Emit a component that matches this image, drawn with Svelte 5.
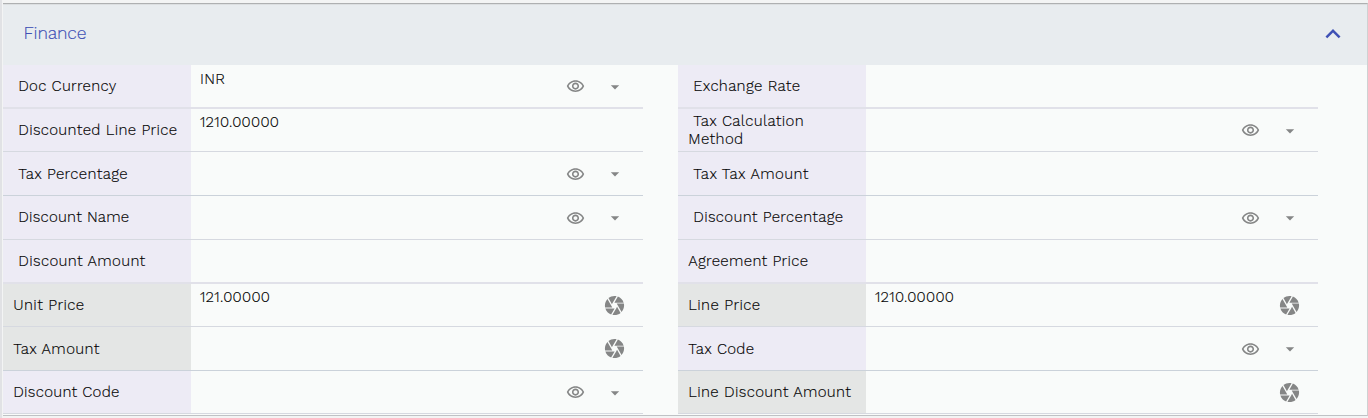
<script>
  const heights = [44, 43, 44, 44, 44, 43, 44, 43];
  const labelTops = [12, 12, 13, 12, 12, 12, 13, 12];
  const left = [
    { lines: [['Doc Currency', 98]], indent: true, value: 'INR', vw: 25, icons: 'lookup' },
    { lines: [['Discounted Line Price', 159]], indent: true, value: '1210.00000', vw: 79 },
    { lines: [['Tax Percentage', 109.4]], indent: true, icons: 'lookup' },
    { lines: [['Discount Name', 111]], indent: true, icons: 'lookup' },
    { lines: [['Discount Amount', 127]], indent: true },
    { lines: [['Unit Price', 71]], value: '121.00000', vw: 70, gray: true, icons: 'camera' },
    { lines: [['Tax Amount', 86.2]], gray: true, icons: 'camera' },
    { lines: [['Discount Code', 106.2]], icons: 'lookup' },
  ];
  const right = [
    { lines: [['Exchange Rate', 107]], indent: true },
    { lines: [['Tax Calculation', 110.5], ['Method', 55]], indent: true, icons: 'lookup' },
    { lines: [['Tax Tax Amount', 115.3]], indent: true },
    { lines: [['Discount Percentage', 150]], indent: true, icons: 'lookup' },
    { lines: [['Agreement Price', 120]] },
    { lines: [['Line Price', 72]], value: '1210.00000', vw: 79, gray: true, icons: 'camera' },
    { lines: [['Tax Code', 66]], icons: 'lookup' },
    { lines: [['Line Discount Amount', 162.6]], gray: true, icons: 'camera' },
  ];

  // Spreads the letters so that the text fills the given width.
  function fit(node, width) {
    const n = node.textContent.length;
    const natural = node.getBoundingClientRect().width;
    node.style.letterSpacing = `${(width - 0.1 - natural) / (n - 1)}px`;
  }
</script>

<div class="page">
  <section class="panel">
    <header>
      <h2><span use:fit={63}>Finance</span></h2>
      <svg class="chevron" viewBox="0 0 24 24"><path d="M12 8l-6 6 1.41 1.41L12 10.83l4.59 4.58L18 14z" /></svg>
    </header>
    <div class="columns">
      {#each [left, right] as column}
        <div class="column">
          {#each column as row, i}
            <div class="row" class:first={i === 0} class:thick={i === 0 || i === 4} class:blue={i === 2 || i === 6} style:height="{heights[i]}px">
              <div class="label" class:gray={row.gray} class:indent={row.indent} style:padding-top="{row.lines.length > 1 ? 3 : labelTops[i]}px">
                {#each row.lines as [text, width]}
                  <div class="line"><span use:fit={width}>{text}</span></div>
                {/each}
              </div>
              <div class="value">{#if row.value}<span use:fit={row.vw}>{row.value}</span>{/if}</div>
              <div class="actions">
                {#if row.icons === 'lookup'}
                  <svg class="eye" viewBox="0 0 24 24"><path d="M12 6c3.79 0 7.17 2.13 8.82 5.5C19.17 14.87 15.79 17 12 17s-7.17-2.13-8.82-5.5C4.83 8.13 8.21 6 12 6m0-2C7 4 2.73 7.11 1 11.5 2.73 15.89 7 19 12 19s9.27-3.11 11-7.5C21.27 7.11 17 4 12 4zm0 5c1.38 0 2.5 1.12 2.5 2.5S13.38 14 12 14s-2.5-1.12-2.5-2.5S10.62 9 12 9m0-2c-2.48 0-4.5 2.02-4.5 4.5S9.52 16 12 16s4.5-2.02 4.5-4.5S14.48 7 12 7z" /></svg>
                  <svg class="drop" viewBox="0 0 24 24"><path d="M7 10l5 5 5-5z" /></svg>
                {:else if row.icons === 'camera'}
                  <svg class="camera" viewBox="0 0 24 24"><path d="M9.4 10.5l4.77-8.26C13.47 2.09 12.75 2 12 2c-2.4 0-4.6.85-6.32 2.25l3.66 6.35.06-.1zM21.54 9c-.92-2.92-3.15-5.26-6-6.34L11.88 9h9.66zm.26 1h-7.49l.29.5 4.76 8.25C21 16.97 22 14.61 22 12c0-.69-.07-1.35-.2-2zM8.54 12l-3.9-6.75C3.01 7.03 2 9.39 2 12c0 .69.07 1.35.2 2h7.49l-1.15-2zm-6.08 3c.92 2.92 3.15 5.26 6 6.34L12.12 15H2.46zm11.27 0l-3.9 6.76c.7.15 1.42.24 2.17.24 2.4 0 4.6-.85 6.32-2.25l-3.66-6.35-.93 1.6z" /></svg>
                {/if}
              </div>
            </div>
          {/each}
        </div>
      {/each}
    </div>
  </section>
</div>

<style>
  :global(body) { background: #f5f6f7; overflow: hidden; }
  .page {
    box-sizing: border-box;
    width: 1368px;
    height: 418px;
    padding: 3px 0 2px 1px;
    background: #f3f4f4;
    border-left: 2px solid #e1e2e5;
    font-family: "Work Sans", Inter, "Liberation Sans", sans-serif;
    font-weight: 300;
    color: #000;
    -webkit-text-stroke: 0.15px currentColor;
  }
  .panel {
    box-sizing: border-box;
    height: 413px;
    background: #f9fbfa;
    border-top: 1px solid #aeb0b1;
    border-right: 1px solid #cfd1d2;
    border-bottom: 1px solid #bfc2c5;
  }
  header {
    box-sizing: border-box;
    display: flex;
    align-items: center;
    justify-content: space-between;
    height: 61px;
    padding: 0 19px 0 20.5px;
    background: #e8ecef;
    border-top: 1px solid #dcdfe1;
  }
  h2 {
    margin: 0 0 4px;
    font-size: 17.5px;
    font-weight: 300;
    line-height: 20px;
    color: #3f51b5;
  }
  svg { display: block; fill: #858686; }
  .chevron { width: 30px; height: 30px; margin-bottom: 2px; fill: #3f51b5; }
  .columns { display: flex; gap: 35px; }
  .column { width: 640px; }
  .row {
    box-sizing: border-box;
    display: flex;
    width: 640px;
    border-bottom: 1px solid #d6d9e0;
  }
  .thick { border-bottom: 2px solid #e1e1e9; }
  .blue { border-bottom-color: #cbd2da; }
  .label {
    box-sizing: border-box;
    width: 188px;
    padding-left: 10.3px;
    background: #edebf5;
    font-size: 15px;
    line-height: 18px;
    white-space: nowrap;
  }
  .gray { background: #e4e6e5; }
  .indent .line:first-child { padding-left: 5px; }
  .value {
    flex: 1;
    padding: 4px 0 0 9px;
    font-size: 15px;
    font-weight: 300;
    line-height: 18px;
    white-space: nowrap;
  }
  .first .value { padding-top: 5px; }
  .actions {
    display: flex;
    align-items: center;
    justify-content: flex-end;
    padding: 1px 18.5px 0 0;
  }
  .eye { width: 19px; height: 19px; margin-right: 19.5px; }
  .drop { width: 20px; height: 20px; }
  .camera { width: 23px; height: 23px; margin: 0 -1px 1px 0; }
</style>
